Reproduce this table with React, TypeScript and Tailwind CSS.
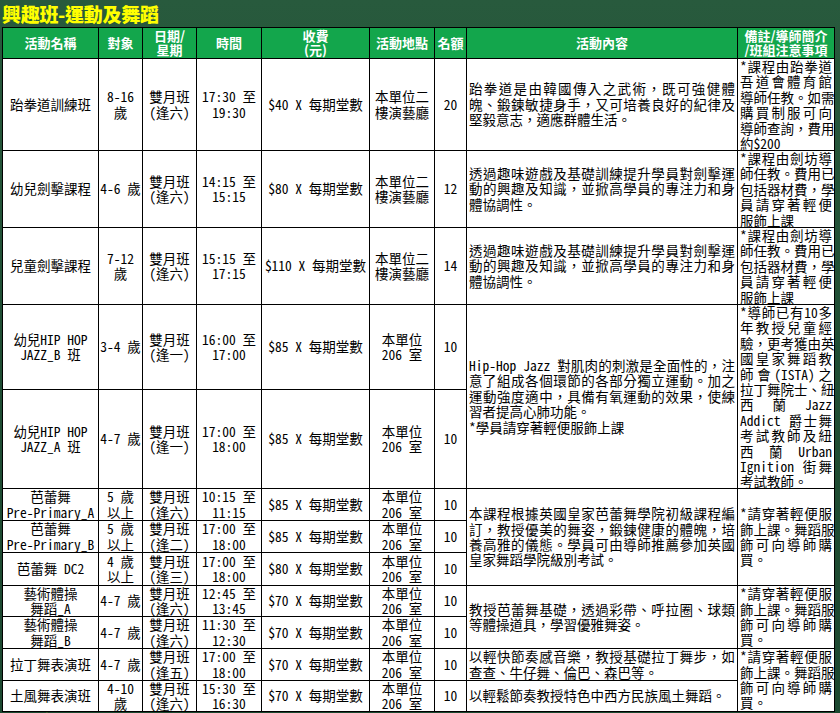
import React from "react";

type Row = {
  name: string[];
  age: string[];
  day: string[];
  time: string[];
  fee: string;
  place: string[];
  quota: string;
};

const rows: Row[] = [
  { name: ["跆拳道訓練班"], age: ["8-16", "歲"], day: ["雙月班", "(逢六)"], time: ["17:30 至", "19:30"], fee: "$40 X 每期堂數", place: ["本單位二", "樓演藝廳"], quota: "20" },
  { name: ["幼兒劍擊課程"], age: ["4-6 歲"], day: ["雙月班", "(逢六)"], time: ["14:15 至", "15:15"], fee: "$80 X 每期堂數", place: ["本單位二", "樓演藝廳"], quota: "12" },
  { name: ["兒童劍擊課程"], age: ["7-12", "歲"], day: ["雙月班", "(逢六)"], time: ["15:15 至", "17:15"], fee: "$110 X 每期堂數", place: ["本單位二", "樓演藝廳"], quota: "14" },
  { name: ["幼兒HIP HOP", "JAZZ_B 班"], age: ["3-4 歲"], day: ["雙月班", "(逢一)"], time: ["16:00 至", "17:00"], fee: "$85 X 每期堂數", place: ["本單位", "206 室"], quota: "10" },
  { name: ["幼兒HIP HOP", "JAZZ_A 班"], age: ["4-7 歲"], day: ["雙月班", "(逢一)"], time: ["17:00 至", "18:00"], fee: "$85 X 每期堂數", place: ["本單位", "206 室"], quota: "10" },
  { name: ["芭蕾舞", "Pre-Primary_A"], age: ["5 歲", "以上"], day: ["雙月班", "(逢六)"], time: ["10:15 至", "11:15"], fee: "$85 X 每期堂數", place: ["本單位", "206 室"], quota: "10" },
  { name: ["芭蕾舞", "Pre-Primary_B"], age: ["5 歲", "以上"], day: ["雙月班", "(逢二)"], time: ["17:00 至", "18:00"], fee: "$85 X 每期堂數", place: ["本單位", "206 室"], quota: "10" },
  { name: ["芭蕾舞 DC2"], age: ["4 歲", "以上"], day: ["雙月班", "(逢三)"], time: ["17:00 至", "18:00"], fee: "$80 X 每期堂數", place: ["本單位", "206 室"], quota: "10" },
  { name: ["藝術體操", "舞蹈_A"], age: ["4-7 歲"], day: ["雙月班", "(逢六)"], time: ["12:45 至", "13:45"], fee: "$70 X 每期堂數", place: ["本單位", "206 室"], quota: "10" },
  { name: ["藝術體操", "舞蹈_B"], age: ["4-7 歲"], day: ["雙月班", "(逢六)"], time: ["11:30 至", "12:30"], fee: "$70 X 每期堂數", place: ["本單位", "206 室"], quota: "10" },
  { name: ["拉丁舞表演班"], age: ["4-7 歲"], day: ["雙月班", "(逢五)"], time: ["17:00 至", "18:00"], fee: "$70 X 每期堂數", place: ["本單位", "206 室"], quota: "10" },
  { name: ["土風舞表演班"], age: ["4-10", "歲"], day: ["雙月班", "(逢六)"], time: ["15:30 至", "16:30"], fee: "$70 X 每期堂數", place: ["本單位", "206 室"], quota: "10" },
];

const fencing = ["透過趣味遊戲及基礎訓練提升學員對劍擊運", "動的興趣及知識，並掀高學員的專注力和身", "體協調性。"];
const fencingNote = ["*課程由劍坊導", "師任教。費用已", "包括器材費，學", "員請穿著輕便", "服飾上課"];
const dressNote = ["*請穿著輕便服", "飾上課。舞蹈服", "飾可向導師購", "買。"];

// row index -> [span, lines]
const content: Record<number, [number, string[]]> = {
  0: [1, ["跆拳道是由韓國傳入之武術，既可強健體", "魄、鍛鍊敏捷身手，又可培養良好的紀律及", "堅毅意志，適應群體生活。"]],
  1: [1, fencing],
  2: [1, fencing],
  3: [2, ["Hip-Hop Jazz 對肌肉的刺激是全面性的，注", "意了組成各個環節的各部分獨立運動。加之", "運動強度適中，具備有氧運動的效果，使練", "習者提高心肺功能。", "*學員請穿著輕便服飾上課"]],
  5: [3, ["本課程根據英國皇家芭蕾舞學院初級課程編", "訂，教授優美的舞姿，鍛鍊健康的體魄，培", "養高雅的儀態。學員可由導師推薦參加英國", "皇家舞蹈學院級別考試。"]],
  8: [2, ["教授芭蕾舞基礎，透過彩帶、呼拉圈、球類", "等體操道具，學習優雅舞姿。"]],
  10: [1, ["以輕快節奏感音樂，教授基礎拉丁舞步，如", "查查、牛仔舞、倫巴、森巴等。"]],
  11: [1, ["以輕鬆節奏教授特色中西方民族風土舞蹈。"]],
};

// row index -> [span, lines, top aligned]
const notes: Record<number, [number, string[], boolean]> = {
  0: [1, ["*課程由跆拳道", "吾道會體育館", "導師任教。如需", "購買制服可向", "導師查詢，費用", "約$200"], true],
  1: [1, fencingNote, true],
  2: [1, fencingNote, true],
  3: [2, ["*導師已有10多", "年教授兒童經", "驗，更考獲由英", "國皇家舞蹈教", "師會(ISTA)之", "拉丁舞院士、紐", "西 蘭 Jazz", "Addict 爵士舞", "考試教師及紐", "西 蘭 Urban", "Ignition 街舞", "考試教師。"], true],
  5: [3, dressNote, false],
  8: [2, dressNote, false],
  10: [2, dressNote, false],
};

const spanClass: Record<number, string> = { 1: "", 2: "row-span-2", 3: "row-span-3" };

function Cell({ children, className = "" }: { children: React.ReactNode; className?: string }) {
  return (
    <div className={`bg-white border-r border-b border-black overflow-hidden flex flex-col ${className}`}>
      {children}
    </div>
  );
}

function Center({ lines }: { lines: string[] }) {
  return (
    <Cell className="items-center justify-center text-center">
      {lines.map((l) => (
        <div key={l} className="whitespace-pre">{l}</div>
      ))}
    </Cell>
  );
}

function Justified({ lines }: { lines: string[] }) {
  return (
    <>
      {lines.map((l, i) => {
        const full = i < lines.length - 1 && !l.endsWith("。");
        return (
          <div
            key={i}
            className={
              full
                ? "whitespace-nowrap text-justify [text-align-last:justify]"
                : "whitespace-nowrap text-left"
            }
          >
            {l}
          </div>
        );
      })}
    </>
  );
}

const headers = [
  ["活動名稱"],
  ["對象"],
  ["日期/", "星期"],
  ["時間"],
  ["收費", "(元)"],
  ["活動地點"],
  ["名額"],
  ["活動內容"],
  ["備註/導師簡介", "/班組注意事項"],
];

export default function App() {
  return (
    <div className="w-[840px] h-[713px] overflow-hidden bg-gradient-to-b from-[#285a3d] via-[#1f4d33] to-[#1c4830] font-['Noto_Sans_CJK_TC','Noto_Sans_CJK_SC',sans-serif] text-black">
      <div className="h-[27px] pl-[2px] flex items-center">
        <h1 className="text-[19px] leading-none font-black text-[#ffff00] tracking-[-0.3px]">興趣班-運動及舞蹈</h1>
      </div>
      <div className="pl-[2px]">
        <div className="grid w-[833px] grid-cols-[96px_44px_54px_65px_108px_65px_32px_271px_97px] grid-rows-[31px_92px_77px_77px_85px_99px_32px_32px_33px_31px_32px_32px_31px] border-l border-t border-black text-[13.5px] leading-[15.4px] font-['Noto_Sans_Mono_CJK_TC','Noto_Sans_CJK_TC','Noto_Sans_CJK_SC',monospace]">
          {headers.map((h) => (
            <div
              key={h.join("")}
              className="bg-[#13a64c] border-r border-b border-black flex flex-col items-center justify-center text-center text-white font-bold text-[13px] leading-[14.5px] font-['Noto_Sans_CJK_TC','Noto_Sans_CJK_SC',sans-serif]"
            >
              {h.map((l) => (
                <div key={l} className="whitespace-nowrap">{l}</div>
              ))}
            </div>
          ))}
          {rows.map((r, i) => (
            <React.Fragment key={i}>
              <Center lines={r.name} />
              <Center lines={r.age} />
              <Center lines={r.day} />
              <Center lines={r.time} />
              <Center lines={[r.fee]} />
              <Center lines={r.place} />
              <Center lines={[r.quota]} />
              {content[i] && (
                <Cell className={`${spanClass[content[i][0]]} justify-center px-[2px]`}>
                  <Justified lines={content[i][1]} />
                </Cell>
              )}
              {notes[i] && (
                <Cell className={`${spanClass[notes[i][0]]} ${notes[i][2] ? "justify-start" : "justify-center"} px-[2px]`}>
                  <Justified lines={notes[i][1]} />
                </Cell>
              )}
            </React.Fragment>
          ))}
        </div>
        <div className="pl-[24px] text-[18px] leading-none font-black text-[#ffff00]">益智及藝術</div>
      </div>
    </div>
  );
}
